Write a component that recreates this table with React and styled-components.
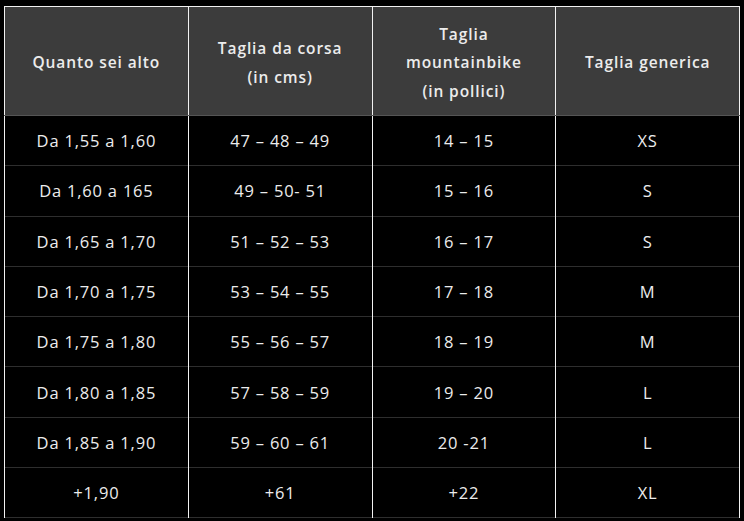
import React from 'react'
import styled, { createGlobalStyle } from 'styled-components'

const Global = createGlobalStyle`
  html, body { background: #000; }
  body {
    margin: 0;
    padding: 6px 4px;
    font-family: "Open Sans", Lato, sans-serif;
  }
`

const Table = styled.table`
  width: 736px;
  border-collapse: collapse;
  table-layout: fixed;
  color: #ececec;
  border-top: 1px solid #f2f2f2;
  border-bottom: 1px solid #2e2e2e;
`

const Head = styled.th`
  background: #3c3c3c;
  height: 105px;
  padding: 3px 14px 0;
  font-size: 15.5px;
  font-weight: 600;
  letter-spacing: 0.9px;
  line-height: 28.5px;
  text-align: center;
  border-left: 1px solid #f2f2f2;
  border-right: 1px solid #f2f2f2;
  border-bottom: 1px solid #555;
`

const Cell = styled.td`
  height: 49.3px;
  padding: 0;
  font-size: 16.5px;
  font-weight: 400;
  letter-spacing: 0.8px;
  text-align: center;
  border-left: 1px solid #f2f2f2;
  border-right: 1px solid #f2f2f2;
  border-top: 1px solid #2e2e2e;
`

const headers = [
  ['Quanto sei alto'],
  ['Taglia da corsa', '(in cms)'],
  ['Taglia', 'mountainbike', '(in pollici)'],
  ['Taglia generica'],
]

const rows = [
  ['Da 1,55 a 1,60', '47 – 48 – 49', '14 – 15', 'XS'],
  ['Da 1,60 a 165', '49 – 50- 51', '15 – 16', 'S'],
  ['Da 1,65 a 1,70', '51 – 52 – 53', '16 – 17', 'S'],
  ['Da 1,70 a 1,75', '53 – 54 – 55', '17 – 18', 'M'],
  ['Da 1,75 a 1,80', '55 – 56 – 57', '18 – 19', 'M'],
  ['Da 1,80 a 1,85', '57 – 58 – 59', '19 – 20', 'L'],
  ['Da 1,85 a 1,90', '59 – 60 – 61', '20 -21', 'L'],
  ['+1,90', '+61', '+22', 'XL'],
]

export default function App() {
  return (
    <>
      <Global />
      <Table>
        <thead>
          <tr>
            {headers.map((lines, i) => (
              <Head key={i}>
                {lines.map((l, j) => (
                  <React.Fragment key={j}>
                    {j > 0 && <br />}
                    {l}
                  </React.Fragment>
                ))}
              </Head>
            ))}
          </tr>
        </thead>
        <tbody>
          {rows.map((r, i) => (
            <tr key={i}>
              {r.map((c, j) => (
                <Cell key={j}>{c}</Cell>
              ))}
            </tr>
          ))}
        </tbody>
      </Table>
    </>
  )
}
